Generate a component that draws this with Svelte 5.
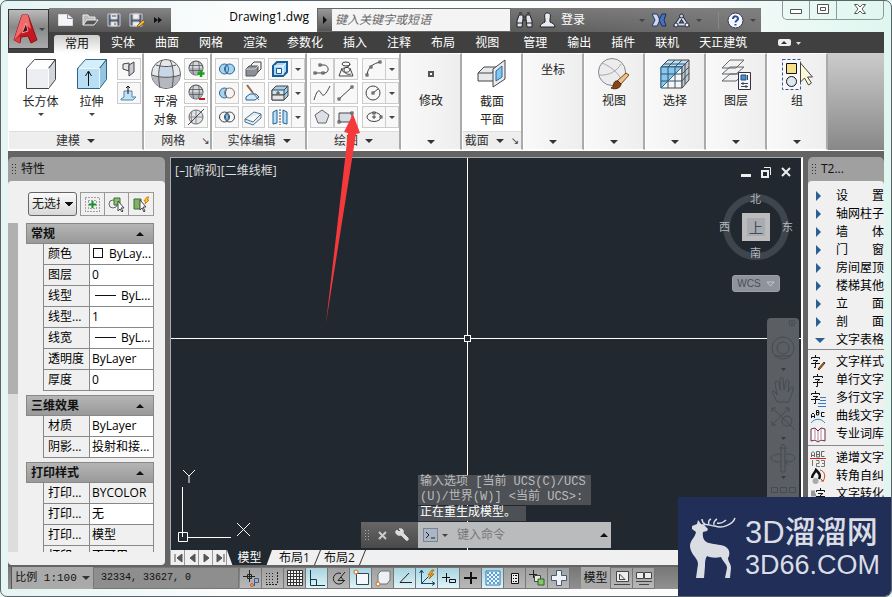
<script>
const svg = (w, h, body) => `<svg width="${w}" height="${h}" viewBox="0 0 ${w} ${h}" fill="none" stroke="#444" aria-hidden="true">${body}</svg>`;
const globe = '<circle cx="9" cy="8" r="7" fill="#d5d8dd"/><path d="M2.500 8h13v3c-3 5-10 5-13 0z" fill="#aeb3bc" stroke="none"/><path d="M2.500 5.500h13M2.500 10.500h13M6.500 1.500c-1 4-1 9 0 13M11.500 1.500c1 4 1 9 0 13" stroke="#555" stroke-width=".8"/>';
const node = (x, y) => `<rect x="${x}" y="${y}" width="2" height="2" fill="#fff"/>`;

const icons = {
    // quick access
    fresh: svg(17, 14, '<path d="M1.500 1.500h9l5 4v7h-14z" fill="#f5f6fa" stroke="#ddd"/><path d="M10.500 1.500v4h5" stroke="#889"/>'),
    open: svg(17, 14, '<path d="M1 12V2h5l1 2h6v3" fill="#bbb" stroke="#eee"/><path d="M1 12l4-5h11l-4 5z" fill="#555" stroke="#eee"/>'),
    save: svg(14, 14, '<path d="M1 1h12v12H1z" fill="#536078" stroke="#ccd"/><path d="M4 1h6v5H4zM4 9h6v4H4z" fill="#eee" stroke="#ccc"/><path d="M5 3h4M8 10v2"/>'),
    saveas: svg(17, 15, '<path d="M1 1h12v12H1z" fill="#536078" stroke="#ccd"/><path d="M4 1h6v5H4zM4 9h6v4H4z" fill="#eee" stroke="#ccc"/><path d="M8 13l6-6 2 2-6 5z" fill="#f5bb3c" stroke="#8c5a10"/>'),
    more: svg(8, 8, '<path d="M0 1l4 3-4 3zM4 1l4 3-4 3z" fill="#111" stroke="none"/>'),
    logo: svg(27, 34, '<path d="M2 28L10 3h6l9 25-6 3-3-7-7 1-1 6z" fill="#c41720" stroke="#8d1218"/><path d="M10 3h6l3 14-5-4-6 9-6 6z" fill="#ef6a6d" stroke="none"/><path d="M14 11l2 8-6 2z" fill="#4b1518" stroke="#f49a98"/><path d="M2 28l6-4v7z" fill="#e33b3e" stroke="none"/>'),

    // info center
    find: svg(17, 16, '<path d="M3 3h4v4l-1 8H1V9zM10 3h4l2 6v6h-5l-1-8z" fill="#dfe3ec" stroke="#222"/><path d="M7 5h3M7 8h3M3 1h3M11 1h3M1 11h5M11 11h5" stroke="#222"/>'),
    user: svg(17, 16, '<path d="M1 15c0-3 3-4 5-5V7c-1-5 0-6 2.500-6S12 2 11 7v3c2 1 5 2 5 5z" fill="#e8ebf3" stroke="#222"/>'),
    exchange: svg(16, 14, '<path d="M1 1h5l3 6-3 6H1l3-6z" fill="#cfd9f2" stroke="#223a72"/><path d="M15 1h-4L8 7l3 6h4l-2-6z" fill="#4772bd" stroke="#17305d"/>'),
    apps: svg(17, 15, '<path d="M8.500 4L3.500 11.500h10z" stroke="#2a3142" stroke-width="4"/><path d="M8.500 4L3.500 11.500h10z" stroke="#d5daea" stroke-width="2"/><circle cx="8.500" cy="3" r="2" fill="#c6cde0" stroke="#2a3142"/><circle cx="3" cy="12" r="2" fill="#eef" stroke="#2a3142"/><circle cx="14" cy="12" r="2" fill="#eef" stroke="#2a3142"/>'),
    help: svg(17, 17, '<circle cx="8.500" cy="8.500" r="7.500" fill="#f5f7fc" stroke="#323c50"/><path d="M6 7c0-4 5.500-3 5 0-.3 1.600-2.500 1.500-2.500 3.500M8.500 12v1.600" stroke="#2a4d8e" stroke-width="2"/>'),

    // large ribbon icons
    box: svg(32, 32, '<path d="M1.500 10.500l8-9h21l-7 9z" fill="#fdfdfe"/><path d="M1.500 10.500h22v20h-22z" fill="#eceef1"/><path d="M23.500 10.500l7-9v20l-7 9z" fill="#d2d5db"/><path d="M2 10.500h21.500V30" stroke="#fff"/>'),
    extrude: svg(32, 32, '<path d="M1.500 10.500l8-9h21l-7 9z" fill="#d6edfa" stroke="#2b6587"/><path d="M1.500 10.500h22v20h-22z" fill="#b8dff4" stroke="#2b6587"/><path d="M23.500 10.500l7-9v20l-7 9z" fill="#94c4df" stroke="#2b6587"/><path d="M2.500 10.500h21V30" stroke="#e9f6fd"/><path d="M12.500 28V14M9.500 18l3-5 3 5" stroke="#111"/>'),
    sphere: svg(32, 32, '<circle cx="16" cy="16" r="14.500" fill="#e6e8ec" stroke="#666"/><path d="M2 17c8 3 20 3 28 0C30 34 2 34 2 17z" fill="#b4b9c1" stroke="none"/><path d="M10 8c4 1 8 1 12 0l1 10c-5 1-9 1-14 0z" fill="#c9d6e6" stroke="none"/><path d="M2 17c8 3 20 3 28 0M6 7c6 2 14 2 20 0M12 2c-4 8-4 18-2 28M20 2c4 8 4 18 2 28" stroke="#555"/>'),
    section: svg(32, 32, '<path d="M2 15l6-6h12v14H2z" fill="#e7e9ed"/><path d="M2 15h14l4-6"/><path d="M17 11L29 2v19l-12 8z" fill="#e8eaef"/><path d="M20 13l6-5v11l-6 4z" fill="#85c5ef" stroke="#24669a"/>'),
    visual: svg(34, 34, '<circle cx="15" cy="15" r="13.500" fill="#ececef" stroke="#888"/><path d="M5 6c10 4 17 11 20 18M2 18c10 1 18-4 22-11" stroke="#aaa"/><path d="M20 24l9-8 3 2-8 9z" fill="#ecc18b" stroke="#7a4717"/><path d="M14 31c4-1 1-8 7-7l3 3c0 4-6 6-10 4z" fill="#864518" stroke="#55290b"/>'),
    select: svg(32, 32, '<path d="M2 9l7-7h21L23 9z" fill="#bcdff5"/><path d="M2 9h21v21H2z" fill="#f5f6f8"/><path d="M2 9h21L2 30z" fill="#86c6ef" stroke="#276b9c"/><path d="M23 9l7-7v20l-7 8z" fill="#c5c8ce"/><path d="M9 9v21M16 9v21M2 16h21M2 23h21M9 9l7-7M16 9l7-7M5 6h22M23 16l7-7M23 23l7-8M26 6v20" stroke="#345266"/>'),
    layers: svg(32, 32, '<path d="M2 23l8-7h14l-8 7zM2 16l8-7h14l-8 7zM2 10l8-8h14l-8 8z" fill="#f1f2f4" stroke="#666"/><path d="M18.500 14.500h12v17h-12z" fill="#f4f7fb" stroke="#334"/><path d="M21 17h5v5h-5z" fill="#4b8fd0" stroke="#1f4c82"/><path d="M27.500 17v5M21 25.500h7M21 28.500h7M23 24v3M26 27v3"/>'),
    group: svg(32, 33, '<path d="M1.500 1.500h18v30h-18z" fill="#f8f8fa" stroke="#31588e" stroke-dasharray="3 2"/><path d="M5.500 5.500h10v10h-10z" fill="#f7e089" stroke="#111"/><circle cx="10.500" cy="23.500" r="5" fill="#dceaf0" stroke="#111"/><path d="M19.500 5v19l4-4 4 7 3-2-4-6h5z" fill="#faf8d6" stroke="#444"/>'),
    modify: svg(8, 8, '<rect x="2" y="2" width="4" height="4" stroke="#555" stroke-width="2" fill="#fff"/>'),

    // small ribbon icons
    polysolid: svg(18, 18, '<path d="M3 4l6-1v8l-6-2z" fill="#e3e6eb"/><path d="M9 5l5-3v10l-5 4z" fill="#c8ccd3"/>'),
    presspull: svg(18, 18, '<path d="M1 15l3-2V7h8v6h4l-3 3H1z" fill="#c3e2f4" stroke="#4a86a8"/><path d="M8 10V2M6 4l2-2 2 2" stroke="#111"/>'),
    meshAdd: svg(18, 18, globe + '<path d="M14 10v7M10.500 13.500h7" stroke="#17a317" stroke-width="2.500"/>'),
    meshDel: svg(18, 18, globe + '<path d="M12 15h6" stroke="#c11d16" stroke-width="2"/>'),
    meshOff: svg(18, 18, '<circle cx="9" cy="9" r="7" fill="#e0e2e7" stroke="#666"/><path d="M2 9h14M9 2v14M5 3c-1 4-1 8 0 12" stroke="#888"/><path d="M1 17L17 1"/>'),
    union: svg(18, 18, '<circle cx="6.500" cy="9" r="5" fill="#a9d4f0" stroke="#286596"/><circle cx="11.500" cy="9" r="5" fill="#a9d4f0" stroke="#286596"/><path d="M9 5c-2 2-2 6 0 8 2-2 2-6 0-8z" stroke="#286596"/>'),
    subtract: svg(18, 18, '<circle cx="6.500" cy="9" r="5" fill="#a9d4f0" stroke="#286596"/><circle cx="11.500" cy="9" r="5" fill="#f4f4f4" stroke="#8c6e62"/><path d="M9 5c-2 2-2 6 0 8" stroke="#286596"/>'),
    intersect: svg(18, 18, '<circle cx="6.500" cy="9" r="5"/><circle cx="11.500" cy="9" r="5"/><path d="M9 5c-2 2-2 6 0 8 2-2 2-6 0-8z" fill="#8cc5ec" stroke="#286596"/>'),
    interfere: svg(18, 18, '<path d="M7 5l3-3h7v7l-3 3H7z" fill="#eff2f6"/><path d="M2 9l3-3h9v6l-3 4H2z" fill="#8b9098" stroke="#555"/><path d="M2 9h9l3-3" stroke="#ccc"/>'),
    slice: svg(18, 18, '<path d="M3 1l6 8" stroke="#95694a" stroke-width="2"/><path d="M2 13l4-3h6l3 3-4 3H2z" fill="#d5eaf8" stroke="#22659a"/><path d="M9 9l6 7" stroke="#667"/>'),
    thicken: svg(18, 18, '<path d="M1 11l9-7 7 2-8 8zM1 11v3l8 3 8-7V6" fill="#e0edf7" stroke="#4d718c"/>'),
    shell: svg(18, 18, '<path d="M2 6l4-4h10v10l-4 4H2z" fill="#a9d6f3" stroke="#165c98" stroke-width="2"/><path d="M5.500 8.500h5v5h-5z" fill="#fff" stroke="#165c98"/><path d="M12 6l3-3M3 6h9v9" stroke="#fff"/>'),
    offsetFace: svg(18, 18, '<path d="M1 6l4-4h12v10l-4 4H1z" fill="#9fcfed"/><path d="M1 6h12v5H1z" fill="#cfe7f5"/><path d="M1 11h12v5H1z" fill="#e4e6ea"/><path d="M13 6l4-4M13 11l4-4M7 10V7M5 9h4"/>'),
    mirror: svg(18, 18, '<path d="M2 4l4-2v13l-4 1zM16 4l-4-2v13l4 1z" fill="#b9def4" stroke="#226598"/><path d="M9 1v16" stroke-dasharray="2 1"/>'),
    pline: svg(18, 18, `<path d="M2 13h9c6 0 5-8 0-8H8"/>${node(1, 12)}${node(9, 12)}${node(6, 4)}`),
    spiral: svg(18, 18, '<path d="M5 8l-3 8h14l-3-8"/><ellipse cx="9" cy="4" rx="4" ry="2"/><path d="M13 4c0 4-8 3-8 6s8 3 8 0-6-4-6 0 5 5 7 4"/>'),
    spline: svg(18, 18, '<path d="M1 16C4 6 6 5 8 9s4 3 9-7"/>'),
    line: svg(18, 18, `<path d="M2 15L15 3"/>${node(1, 14)}${node(14, 2)}`),
    polygon: svg(18, 18, '<path d="M9 2l7 5-3 8H5L2 7z" fill="#dde0e6" stroke="#666"/>'),
    rect: svg(18, 18, `<path d="M2 5h13v9H2z" fill="#d9dce5"/>${node(1, 13)}${node(14, 4)}`),
    arc: svg(18, 18, `<path d="M2 16C2 8 8 3 16 2"/>${node(1, 14)}${node(5, 6)}${node(14, 1)}`),
    circle: svg(18, 18, `<circle cx="8" cy="9" r="7"/><path d="M8 9l5-4"/>${node(7, 8)}`),
    ellipse: svg(18, 18, `<ellipse cx="9" cy="9" rx="7" ry="4.500"/><path d="M9 7v4M7 9h4"/>${node(15, 8)}${node(8, 4)}`),

    // properties toolbar
    pickadd: svg(17, 17, '<path d="M1.500 1.500h14v14h-14zM4.500 4.500h8v8h-8z" stroke="#555" stroke-dasharray="1 2"/><path d="M8.500 5v7M5 8.500h7" stroke="#139126" stroke-width="2"/>'),
    pickobj: svg(17, 17, '<circle cx="5" cy="8" r="4" stroke="#667"/><path d="M6 2h6v7H6z" fill="#8bbd6d" stroke="#35712b"/><path d="M10 5v10l2-2 2 3 1-1-2-3h3z" fill="#fff"/>'),
    quick: svg(17, 17, '<path d="M1 3h7v10H1z" fill="#7fb262" stroke="#35712b"/><path d="M14 1l-3 4h2l-1 3 4-4h-2l2-3z" fill="#ffd33c" stroke="#d5830d"/><path d="M7 4v10l2-2 2 4 1-1-2-4h3z" fill="#fff"/>'),

    wrench: svg(15, 15, '<path d="M2 2l2 2 2-2-2-1c4-1 5 2 4 4l5 5c1 2-1 3-2 2L6 7C3 8 0 6 1 3z" fill="#ddd" stroke="#ddd"/>'),
    prompt: svg(15, 14, '<rect x=".5" y=".5" width="14" height="13" fill="#aab6c4" stroke="#788493"/><path d="M3 4l3 3-3 3M8 10h4" stroke="#223"/>'),

    // text tools
    styleText: svg(16, 17, '<path d="M5.500 1v2M1.500 5V3.500h8V5M3 6.500h5L5.500 8v5.500H4M1 9.500h9" stroke="#111"/><path d="M8 15l6-7 1 1-6 7z" fill="#c97936" stroke="#57320f"/>'),
    singleText: svg(16, 17, '<path d="M7.500 2v2M3.500 6V4.500h9V6M5 7.500h5L7.500 9v5.500H6M3 10.500h10" stroke="#111"/>'),
    multiText: svg(16, 17, '<path d="M5.500 1v2M1.500 5V3.500h8V5M3 6.500h5L5.500 8v5.500H4M1 9.500h9" stroke="#111"/><path d="M10 7.500h6M10 10.500h6M8 13.500h8M8 16.500h8" stroke="#347cc5"/>'),
    curveText: svg(16, 17, '<path d="M1.500 10V6.500L3 5l1.500 1.500V10M2 8.500h2M6.500 7V2.500h2L9 4.500 8.500 7h-2M7 4.500h2M14.500 4.500h-3v4h3" stroke="#111"/><path d="M1 15c4-5 10-5 14 0" stroke="#258bd0"/>'),
    dictionary: svg(16, 17, '<path d="M1 3l4-1 3 3 3-3 4 1v12l-4-1-3 2-3-2-4 1z" fill="#fff" stroke="#6a2948"/><path d="M8 5v10M5 3v10M11 3v10" stroke="#b0879a"/>'),
    increment: svg(16, 17, '<path d="M1.500 7V3L3 1.500 4.500 3v4M2 5.500h2M6.500 7V1.500h3V7h-3M7 4.500h2M14.500 1.500h-3v5h3" stroke="#666"/><path d="M0 8.500h16" stroke="#d6281f"/><path d="M2.500 10v6M6 10.500h3v3H6.500v3H10M11 10.500h3.500v6H11M12 13.500h3" stroke="#777"/>'),
    rotateText: svg(16, 17, '<path d="M2 10c0-4 3-5 4-8 3 3 5 5 3 9" stroke="#111" stroke-width="2.500"/><path d="M10 2c5 1 6 7 3 11l-2-2M11 13h3" stroke="#c84917"/><circle cx="5.500" cy="13" r="3" fill="#aaa" stroke="none"/>'),
    convertText: svg(16, 17, '<path d="M10.500 2v2M6.500 6V4.500h8V6M8 7.500h5L10.500 9v6M6 10.500h9" stroke="#111"/><path d="M1 6h4M1 9h5" stroke="#999" stroke-width="3"/>'),

    // status bar toggles
    infer: svg(18, 18, '<path d="M1 7.500h12M7.500 1v12M5.500 5.500h4v4h-4z" stroke="#222"/><path d="M12.500 9.500h4v4h-4zM12.500 13v4" stroke="#365d99"/><circle cx="10" cy="16" r="1.500" stroke="#d05c1b"/>'),
    snap: svg(18, 18, '<path d="M2 4.500h9M2 7.500h9M2 10.500h9M2 13.500h9" stroke-dasharray="1 2" stroke="#222"/><path d="M13.500 3v11M2 15.500h12" stroke-dasharray="2 1" stroke="#222"/>'),
    grid: svg(18, 18, '<path d="M1.500 1.500h15v15h-15zM4.500 1v15M7.500 1v15M10.500 1v15M13.500 1v15M1 4.500h15M1 7.500h15M1 10.500h15M1 13.500h15" fill="#f4f4f4" stroke="#333"/>'),
    ortho: svg(18, 18, '<path d="M2.500 1v15.500H17M2 10.500h6.500V16" stroke="#123a48"/>'),
    polar: svg(18, 18, '<path d="M11 4.500a5.500 5.500 0 1 0 3 7M8 11.500L15 3M8 11.500h7M11 8l3 4" stroke="#222"/>'),
    osnap: svg(18, 18, '<path d="M4.500 4.500h12v11h-12z" fill="#f4f7fb" stroke="#345"/><circle cx="4" cy="3" r="2" stroke="#d46518" fill="#fff"/>'),
    osnap3: svg(18, 18, '<path d="M4 5l3-3h9v9l-3 4H4z" fill="#eceff4" stroke="#677"/><circle cx="4" cy="15" r="2" stroke="#d46518" fill="#fff"/>'),
    otrack: svg(18, 18, '<path d="M13 4L4 13.500h12" stroke="#222"/>'),
    ducs: svg(18, 18, '<path d="M3.500 2v12.500H16M3.500 14.500l7-7M1.500 4l2-3 2 3M14 12.500l3 2-3 2" stroke="#164a62"/><path d="M14 1l-4 5h3l-2 4 5-5h-3l3-4z" fill="#f4b92a" stroke="#b66b0b"/>'),
    dyn: svg(18, 18, '<path d="M2 8.500h8M6.500 4v9M9.500 10.500h6v3h-6z" stroke="#111"/>'),
    lwt: svg(18, 18, '<path d="M2 9h13M9 3v12" stroke="#111" stroke-width="2"/>'),
    trans: svg(18, 18, '<path d="M2 2h14v14H2z" fill="#eaf5fd" stroke="#2f74a9"/><path d="M3 4h12M3 8h12M3 12h12M5 6h10M5 10h10M5 14h10" stroke="#5d9ed4" stroke-width="2" stroke-dasharray="2 2"/>'),
    props: svg(18, 18, '<path d="M5.500 4.500h7v10h-7z" stroke="#111" fill="#eee"/><path d="M7 6.500h1M9 6.500h2M7 9.500h1M9 9.500h2M7 12.500h1M9 12.500h2" stroke="#111"/>'),
    cycle: svg(18, 18, '<path d="M1 5.500h8M5.500 1v8" stroke="#222"/><path d="M6.500 6.500h6v6h-6z" fill="#e4eedd"/><path d="M10 10h6v6h-6z" fill="#8cc370" stroke="#2c6321"/>'),
    plus: svg(18, 18, '<path d="M6.500 1.500h5v5h5v5h-5v5h-5v-5h-5v-5h5z" fill="#eff3f9" stroke="#485873"/>'),
    paper: svg(18, 18, '<path d="M3.500 2.500h12v10h-12z" fill="#eee"/><path d="M6.500 5v5.500H12z"/><path d="M1 15.500h16"/>'),
    views: svg(18, 18, '<path d="M1.500 3.500h7v6h-7zM9.500 3.500h7v6h-7z" fill="#eee"/><path d="M1 12.500h16M4 15.500h10"/>'),
};

const tabs = ['实体', '曲面', '网格', '渲染', '参数化', '插入', '注释', '布局', '视图'];
const extra_tabs = ['管理', '输出', '插件', '联机', '天正建筑'];
const edit_rows = [['union', 'interfere', 'shell'], ['subtract', 'slice', 'offsetFace'], ['intersect', 'thicken', 'mirror']];
const draw_rows = [['pline', 'spiral', 'arc'], ['spline', 'line', 'circle'], ['polygon', 'rect', 'ellipse']];
const collapsed = [['视图', 'visual'], ['选择', 'select'], ['图层', 'layers'], ['组', 'group']];

const sections = [
    {title: '常规', rows: [
        ['颜色', 'ByLay...', 'swatch'], ['图层', '0'], ['线型', 'ByL...', 'dash'], ['线型...', '1'],
        ['线宽', 'ByL...', 'dash'], ['透明度', 'ByLayer'], ['厚度', '0'],
    ]},
    {title: '三维效果', rows: [['材质', 'ByLayer'], ['阴影...', '投射和接...']]},
    {title: '打印样式', rows: [['打印...', 'BYCOLOR', 'locked'], ['打印...', '无'], ['打印...', '模型', 'locked'], ['打印...', '不可用', 'locked']]},
];

const menus = ['设　　置', '轴网柱子', '墙　　体', '门　　窗', '房间屋顶', '楼梯其他', '立　　面', '剖　　面', '文字表格'];
const text_tools = [['文字样式', 'styleText'], ['单行文字', 'singleText'], ['多行文字', 'multiText'], ['曲线文字', 'curveText'], ['专业词库', 'dictionary']];
const more_tools = [['递增文字', 'increment'], ['转角自纠', 'rotateText'], ['文字转化', 'convertText']];

const toggles = ['infer', 'snap', 'grid', 'ortho', 'polar', 'osnap', 'osnap3', 'otrack', 'ducs', 'dyn', 'lwt', 'trans', 'props', 'cycle', 'plus'];
let active = $state(['ortho', 'osnap', 'otrack', 'ducs', 'dyn', 'trans']);
function toggle(name) {
    active = active.includes(name) ? active.filter(n => n !== name) : [...active, name];
}
</script>

{#snippet tool(name)}
  <button class=tool aria-label={name}>{@html icons[name]}</button>
{/snippet}

{#snippet split(name)}
  <div class=split>
    {@render tool(name)}
    <button class=drop aria-label="{name} options"><i class=caret></i></button>
  </div>
{/snippet}

<div class=window>
  <header>
    <button class=app aria-label=Menu>{@html icons.logo}<i class=caret></i></button>
    <div class=titlebar>
      <div class=quickbar>
        {#each ['fresh', 'open', 'save', 'saveas', 'more'] as name}
          <button aria-label={name}>{@html icons[name]}</button>
        {/each}
      </div>
      <h1>Drawing1.dwg</h1>
      <div class=search>
        <button aria-label="Search options"><i class=play></i></button>
        <input type=search placeholder="键入关键字或短语" aria-label="键入关键字或短语">
      </div>
      <div class=info>
        <button aria-label=Find>{@html icons.find}</button>
        <button class=login>{@html icons.user}登录</button>
        <i class="caret push"></i>
        <button aria-label=Exchange>{@html icons.exchange}</button>
        <button aria-label=Apps>{@html icons.apps}</button>
        <i class=caret></i>
        <button class=help aria-label=Help>{@html icons.help}</button>
        <i class=caret></i>
      </div>
      <div class=controls>
        <button aria-label=Minimize><svg width="14" height="14" fill="#fff" stroke="#555"><path d="M1.500 6.500h11v4h-11z"/></svg></button>
        <button aria-label=Maximize><svg width="14" height="14" fill="#fff" stroke="#555"><path d="M1.500 1.500h11v9h-11zM4.500 4.500h5v3h-5z"/></svg></button>
        <button class=close aria-label=Close><svg width="14" height="14" fill="#fff" stroke="#555"><path d="M1.500 1.500h3L7 4l2.500-2.500h3L9 6l3.500 4.500h-3L7 8l-2.500 2.500h-3L5 6z"/></svg></button>
      </div>
    </div>
    <nav>
      <button class=current>常用</button>
      {#each tabs as tab}<button>{tab}</button>{/each}
      <span class=extra>{#each extra_tabs as tab}<button>{tab}</button>{/each}</span>
      <button class=collapse aria-label=Collapse><svg width="24" height="8"><rect width="13" height="7" rx="2" fill="#eee"/><path d="M3 5l3-3 3 3z" fill="#333"/><path d="M18 3h5l-2.500 3z" fill="#ddd"/></svg></button>
    </nav>
  </header>

  <div class=ribbon>
    <section class="panel modeling">
      <div class=content>
        <button class=big>{@html icons.box}<span>长方体</span><i class=caret></i></button>
        <button class=big>{@html icons.extrude}<span>拉伸</span><i class=caret></i></button>
        <div class=stack>{@render tool('polysolid')}{@render tool('presspull')}</div>
      </div>
      <h2>建模 <i class=arrow></i></h2>
    </section>
    <section class="panel mesh">
      <div class=content>
        <button class="big narrow">{@html icons.sphere}<span>平滑<br>对象</span></button>
        <div class=stack>{@render tool('meshAdd')}{@render tool('meshDel')}{@render tool('meshOff')}</div>
      </div>
      <h2>网格 <span class=launch>↘</span></h2>
    </section>
    <section class="panel edit">
      <div class="content rows">
        {#each edit_rows as [a, b, c]}
          <div>{@render tool(a)}{@render tool(b)}{@render split(c)}</div>
        {/each}
      </div>
      <h2>实体编辑 <i class=arrow></i></h2>
    </section>
    <section class="panel draw">
      <div class="content rows">
        {#each draw_rows as [a, b, c]}
          <div><span class=pair>{@render tool(a)}{@render tool(b)}</span>{@render split(c)}</div>
        {/each}
      </div>
      <h2>绘图 <i class=arrow></i></h2>
    </section>
    <button class="panel folded"><span class=pic>{@html icons.modify}</span>修改<i class=arrow></i></button>
    <section class=panel>
      <div class=content>
        <button class="big wide">{@html icons.section}<span>截面<br>平面</span></button>
      </div>
      <h2>截面 <i class=arrow></i><span class=launch>↘</span></h2>
    </section>
    <button class="panel folded coord">坐标<i class=arrow></i></button>
    {#each collapsed as [label, icon]}
      <button class="panel folded"><span class=pic>{@html icons[icon]}</span>{label}<i class=arrow></i></button>
    {/each}
  </div>

  <main>
    <aside class="palette properties">
      <h3><i class=grip></i>特性</h3>
      <div class=palette-body>
        <div class=picker>
          <select aria-label=Selection><option>无选择</option></select>
          <div class=picks>
            {#each ['pickadd', 'pickobj', 'quick'] as name}
              <button aria-label={name}>{@html icons[name]}</button>
            {/each}
          </div>
        </div>
        <div class=list>
          <div class=scroll><i></i></div>
          <div class=groups>
            {#each sections as section}
              <h4>{section.title}<i class=up></i></h4>
              <table>
                <tbody>
                  {#each section.rows as [label, value, kind]}
                    <tr><th scope=row>{label}</th><td class:locked={kind === 'locked'}>{#if kind === 'swatch' || kind === 'dash'}<i class={kind}></i>{/if}{value}</td></tr>
                  {/each}
                </tbody>
              </table>
            {/each}
          </div>
        </div>
      </div>
    </aside>

    <div class=document>
      <div class=canvas>
        <p class=view-label>[–][俯视][二维线框]</p>
        <i class=cross-x></i><i class=cross-y></i><i class=pickbox></i>
        <div class=mdi>
          <button aria-label="Minimize drawing"><svg width="12" height="12"><path d="M1 8h10v3H1z" fill="#eee"/></svg></button>
          <button aria-label="Restore drawing"><svg width="12" height="12" fill="none" stroke="#eee"><path d="M2 5h6v6H2z" stroke-width="2"/><path d="M4 1.500h6.500V9"/></svg></button>
          <button aria-label="Close drawing"><svg width="12" height="12" stroke="#eee" stroke-width="2"><path d="M2 2l8 8M10 2l-8 8"/></svg></button>
        </div>
        <div class=compass>
          <span class=n>北</span><span class=w>西</span><b>上</b><span class=e>东</span><span class=s>南</span>
        </div>
        <button class=wcs>WCS <svg width="9" height="6" fill="none" stroke="#bcc"><path d="M1 1h7L4.500 5z"/></svg></button>
        <div class=navbar>
          <svg width="32" height="192" viewBox="0 0 32 192" fill="none" stroke="#464b51">
            <circle cx="25" cy="5" r="3"/><path d="M24 4l2 2M26 4l-2 2"/>
            <circle cx="16" cy="30" r="11"/><circle cx="16" cy="30" r="6"/><path d="M8 38h16"/>
            <path d="M10 84L5 74c1-2 3-1 5 3L8 64c1-2 3-1 4 1l1 7V61c1-2 3-2 3 0l1 11 2-9c1-2 3-1 3 1l-1 10 3-5c2-1 3 0 2 3l-4 12z"/>
            <path d="M5 90l18 17M22 90L5 107M5 94v-4h4M18 90h4v4M5 103v4h4"/><circle cx="20" cy="103" r="5"/><path d="M23 107l5 5"/>
            <path d="M14 130h4v24h-4zM12 131l4-5 4 5M13 136c-12 0-12 8 0 8M19 136c12 0 12 8 0 8M21 141l-3 3 3 3"/>
            <path d="M4.500 169.500h6v5h-6zM13.500 169.500h6v5h-6zM22.500 169.500h6v5h-6z"/>
            <path d="M14 50h5l-2.500 3zM14 119h5l-2.500 3zM14 158h5l-2.500 3z" fill="#383c42" stroke="none"/>
          </svg>
        </div>
        <svg class=ucs width="84" height="78" fill="none" stroke="#fff" aria-hidden="true">
          <path d="M6 1l6 6 6-6M12 7v7M5.500 18v50M10 68.500h44M1.500 63.500h9v9h-9zM60 54l13 13M73 54L60 67"/>
        </svg>
        <div class=console>
          <p class=log>输入选项 [当前 UCS(C)/UCS<br>(U)/世界(W)] &lt;当前 UCS&gt;:</p>
          <p class="log last">正在重生成模型。</p>
          <div class=command>
            <i class=grip></i>
            <button aria-label=Close><svg width="9" height="9" stroke="#ccc" stroke-width="2"><path d="M1 1l7 7M8 1L1 8"/></svg></button>
            <button aria-label=Customize>{@html icons.wrench}</button>
            <label>{@html icons.prompt}<i class=caret></i><input placeholder="键入命令" aria-label="键入命令"><i class=up></i></label>
          </div>
        </div>
      </div>
      <div class=layouts>
        <div class=steps>
          {#each ['M3 2v8M10 2L5 6l5 4z', 'M9 2L4 6l5 4z', 'M4 2l5 4-5 4z', 'M10 2v8M3 2l5 4-5 4z'] as d}
            <button aria-label=Step><svg width="12" height="12" fill="#555" stroke="#555"><path {d}/></svg></button>
          {/each}
        </div>
        <button class="sheet current">模型</button>
        <button class=sheet>布局1</button>
        <button class=sheet>布局2</button>
      </div>
    </div>

    <aside class="palette tangent">
      <h3><i class=grip></i>T2...</h3>
      <div class=palette-body>
        <ul>
          {#each menus as item, i}
            <li><button><i class={i === menus.length - 1 ? 'tri open' : 'tri'}></i>{item}</button></li>
          {/each}
        </ul>
        {#each [text_tools, more_tools] as group}
          <ul class=tools>
            {#each group as [label, icon]}
              <li><button><span>{@html icons[icon]}</span>{label}</button></li>
            {/each}
          </ul>
        {/each}
      </div>
    </aside>
  </main>

  <footer>
    <button class=scale>比例 1:100 <i class=arrow></i></button>
    <output>32334, 33627, 0</output>
    {#each toggles as name}
      <button class=toggle class:on={active.includes(name)} aria-label={name} aria-pressed={active.includes(name)} onclick={() => toggle(name)}>{@html icons[name]}</button>
    {/each}
    <button class=space>模型</button>
    <button class=toggle aria-label=Layout>{@html icons.paper}</button>
    <button class=toggle aria-label=Views>{@html icons.views}</button>
  </footer>

  <svg class=pointer width="36" height="212" aria-hidden="true"><path d="M28 1L19 19l4 1L1 210 31 21l4-1z" fill="#f5393a"/></svg>

  <div class=watermark>
    <svg width="48" height="64" viewBox="0 0 48 64" fill="none" stroke="#dadde3" stroke-width="1.500" aria-hidden="true">
      <path d="M3 11l5-2 1-4 3 4 3 1 4 4-1 2-4 1c-1 5 1 10 6 11 6 2 13 1 17 4 3 2 4 5 3 9l-1 2c0 4 3 5 3 10l-1 10h-5l2-10c0-4-4-6-6-11-5 1-10 1-14-1-2 3-2 6-2 10l-1 12H7l2-14c0-6-8-10-8-18 0-6 5-8 6-14l-4-3z" fill="#dadde3" stroke="none"/>
      <path d="M13 10c6-2 8 1 13 1 8 3 18-2 20-8M16 9c-2-1-3-3-3-5M20 9c-1-2 0-4 2-5M25 10c-1-2 1-5 3-6M28 8c3 1 7-1 9-3"/>
    </svg>
    <p><b>3D溜溜网</b><span>3D66.COM</span></p>
  </div>
</div>

<style>
:global(body) {
  margin: 0;
  background: #e9f6f3;
}
.window {
  position: relative;
  display: flex;
  flex-direction: column;
  box-sizing: border-box;
  height: 100vh;
  padding: 0 7px 7px;
  border: 1px solid #59646a;
  border-radius: 7px;
  overflow: hidden;
  background: linear-gradient(90deg, #e4f5f3, #fbfcfc 25%, #fcfcfc 75%, #dff6ef);
  font: 12px/18px "Open Sans", "Noto Sans CJK SC", sans-serif;
  color: #222;
}
button, input, select {
  margin: 0;
  padding: 0;
  border: 0;
  background: none;
  font: inherit;
  color: inherit;
}
button {
  display: flex;
  align-items: center;
  justify-content: center;
  white-space: nowrap;
}
h1, h2, h3, h4, p, ul {
  margin: 0;
  padding: 0;
  font-weight: normal;
  font-size: 12px;
  list-style: none;
}
i { flex: none; }
.caret {
  border: 3px solid transparent;
  border-top-color: #444;
  border-bottom: 0;
}
.arrow {
  display: inline-block;
  border: 4px solid transparent;
  border-top-color: #333;
  border-bottom: 0;
}
.up {
  border: 4px solid transparent;
  border-bottom-color: #111;
  border-top: 0;
}
.grip {
  width: 6px;
  height: 12px;
  background: radial-gradient(circle, #333 1px, transparent 1px) 0 0 / 3px 3px;
}

header {
  display: grid;
  grid-template-columns: 41px 1fr;
  grid-template-rows: 31px 21px;
}
.app {
  grid-area: 1 / 1 / 3 / 2;
  align-self: end;
  z-index: 1;
  height: 40px;
  margin-bottom: 4px;
  border: 1px solid #333;
  background: linear-gradient(#bbb, #888 45%, #aaa);
}
.titlebar {
  grid-area: 1 / 2;
  display: flex;
  align-items: flex-end;
}
.quickbar, .info {
  display: flex;
  align-items: center;
  height: 24px;
  background: linear-gradient(#858585, #555);
}
.quickbar {
  width: 122px;
  gap: 8px;
  padding-left: 8px;
  box-sizing: border-box;
}
h1 {
  flex: 1;
  padding: 0 8px 6px 0;
  text-align: right;
  color: #000;
}
.search {
  display: flex;
  box-sizing: border-box;
  width: 194px;
  height: 24px;
  border: 1px solid #666;
}
.search button {
  width: 14px;
  background: linear-gradient(#999, #555);
}
.play {
  border: 4px solid transparent;
  border-left-color: #111;
  border-right: 0;
}
.search input {
  flex: 1;
  min-width: 0;
  padding-left: 3px;
  background: #f4f4f4;
  font-style: italic;
}
.search input::placeholder { color: #666; }
.info {
  box-sizing: border-box;
  width: 250px;
  padding: 0 5px;
  gap: 6px;
  color: #fff;
  background: linear-gradient(90deg, transparent, #8888), linear-gradient(#777, #5a5a5a);
}
.login { gap: 5px; }
.push { margin-left: auto; }
.help {
  margin-left: 10px;
  padding-left: 8px;
  border-left: 1px solid #888;
}
.controls {
  display: flex;
  align-self: flex-start;
  height: 18px;
  margin-left: 21px;
  border: 1px solid #8b989c;
  border-top: 0;
  border-radius: 0 0 5px 5px;
}
.controls button {
  width: 27px;
  border-right: 1px solid #8b989c;
}
.controls .close {
  width: 46px;
  border: 0;
}
nav {
  grid-area: 2 / 1 / 3 / 3;
  display: flex;
  align-items: center;
  gap: 20px;
  padding-left: 46px;
  background: #404040;
  color: #fff;
}
nav .current {
  width: 46px;
  height: 18px;
  margin-right: -9px;
  align-self: flex-end;
  border-radius: 3px 3px 0 0;
  background: linear-gradient(#ccc, #fff);
  color: #111;
}
.extra {
  display: flex;
  gap: 20px;
  margin-left: 4px;
}
.collapse { margin-left: 11px; }

.ribbon {
  display: flex;
  height: 97px;
  border-bottom: 1px solid #fff;
  background: linear-gradient(#ccc, #888);
}
.panel {
  display: flex;
  flex-direction: column;
  flex: none;
  box-sizing: border-box;
  width: 61px;
  border: 1px solid #fff;
  border-right: 2px solid #aaa;
  background: #fff;
}
.modeling { width: 136px; }
.mesh { width: 68px; }
.edit { width: 95px; }
.draw { width: 94px; }
.content {
  display: flex;
  flex: 1;
  padding: 4px 0 0 2px;
}
.modeling .content { padding-left: 6px; }
.panel h2 {
  display: flex;
  align-items: center;
  justify-content: center;
  gap: 7px;
  height: 17px;
  border-top: 1px solid #ddd;
  background: #eee;
  color: #333;
}
.launch {
  font: 10px/10px "DejaVu Sans", sans-serif;
}
.mesh .launch { margin: 0 -16px 0 9px; }
.big {
  flex-direction: column;
  justify-content: flex-start;
  width: 51px;
}
.big.narrow { width: 37px; }
.big.wide { width: 54px; }
.big span { margin-top: 3px; }
.big .caret { margin-top: 2px; }
.stack {
  display: flex;
  flex-direction: column;
  gap: 2px;
}
.tool {
  box-sizing: border-box;
  width: 24px;
  height: 22px;
  border: 1px solid #ccc;
  background: #f8f8f8;
}
.split { display: flex; }
.drop {
  box-sizing: border-box;
  width: 13px;
  border: 1px solid #ccc;
  border-left: 0;
  background: #f8f8f8;
}
.rows {
  flex-direction: column;
  gap: 2px;
}
.rows > div {
  display: flex;
  gap: 3px;
}
.pair {
  display: flex;
  margin-right: 1px;
}
.folded {
  justify-content: flex-start;
  padding: 2px 0 5px;
  background: linear-gradient(90deg, #f9f9f9, #eee);
}
.pic {
  display: flex;
  align-items: center;
  height: 36px;
}
.folded .arrow { margin-top: auto; }
.coord { padding-top: 7px; }

main {
  display: flex;
  flex: 1;
  gap: 5px;
  min-height: 0;
  padding: 6px 0 2px;
  background: #646464;
}
.palette {
  display: flex;
  flex-direction: column;
  flex: none;
  overflow: hidden;
}
.properties { width: 157px; }
.tangent { width: 76px; }
h3 {
  display: flex;
  align-items: center;
  gap: 4px;
  height: 28px;
  margin-bottom: -4px;
  padding: 0 3px 4px;
  box-sizing: border-box;
  border-radius: 5px 5px 0 0;
  background: #a0a0a0;
  color: #111;
}
.palette-body {
  display: flex;
  flex: 1;
  flex-direction: column;
  min-height: 0;
  border-radius: 4px;
  background: #f0f0f0;
}
.picker {
  display: flex;
  gap: 3px;
  padding: 11px 0 7px 20px;
}
select {
  appearance: none;
  box-sizing: border-box;
  width: 49px;
  height: 24px;
  padding: 0 16px 0 3px;
  border: 1px solid #666;
  border-radius: 3px;
  background: linear-gradient(to top right, transparent 50%, #111 50%) 36px 9px / 4px 5px no-repeat, linear-gradient(to top left, transparent 50%, #111 50%) 40px 9px / 4px 5px no-repeat, linear-gradient(#fafafa, #d8d8d8);
}
.picks {
  display: flex;
  border: 1px solid #999;
}
.picks button {
  width: 24px;
  border-right: 1px solid #999;
}
.picks button:last-child { border: 0; }
.list {
  display: flex;
  flex: 1;
  gap: 8px;
  min-height: 0;
  margin-bottom: 13px;
}
.scroll {
  width: 10px;
  background: #ddd;
}
.scroll i {
  display: block;
  height: 52%;
  background: #b0b0b0;
}
.groups {
  width: 128px;
  overflow: hidden;
}
h4 {
  display: flex;
  align-items: center;
  justify-content: space-between;
  box-sizing: border-box;
  height: 21px;
  padding: 0 9px 0 4px;
  border: 1px solid #888;
  background: linear-gradient(#b5b5b5, #999);
  font-weight: bold;
  color: #111;
}
table {
  table-layout: fixed;
  width: 111px;
  margin: 0 0 4px 17px;
  border-collapse: collapse;
  color: #000;
}
th, td {
  height: 20px;
  padding: 0 0 0 4px;
  border: 1px solid #888;
  border-top: 0;
  font-weight: normal;
  line-height: 18px;
  text-align: left;
  white-space: nowrap;
  overflow: hidden;
}
th { width: 41px; }
td {
  padding-left: 2px;
  background: #fff;
}
td.locked { background: #f0f0f0; }
.swatch {
  display: inline-block;
  width: 8px;
  height: 8px;
  margin: 0 6px 0 1px;
  border: 1px solid #111;
}
.dash {
  display: inline-block;
  width: 21px;
  height: 4px;
  margin: 0 5px 0 3px;
  border-top: 1px solid #111;
}

.document {
  display: flex;
  flex: 1;
  flex-direction: column;
  min-width: 0;
  border: 1px solid #aaa;
  border-right: 2px solid #fff;
  border-bottom: 0;
}
.canvas {
  position: relative;
  flex: 1;
  background: #212830;
}
.view-label {
  padding: 4px;
  color: #ddd;
}
.cross-x, .cross-y, .pickbox { position: absolute; background: #fff; }
.cross-x { top: 46%; left: 0; width: 100%; height: 1px; }
.cross-y { left: 47%; top: 0; width: 1px; height: 100%; }
.pickbox {
  top: 46%;
  left: 47%;
  width: 5px;
  height: 5px;
  margin: -3px;
  border: 1px solid #fff;
  background: #212830;
}
.mdi {
  position: absolute;
  top: 8px;
  right: 9px;
  display: flex;
  gap: 8px;
}
.compass {
  position: absolute;
  top: 36px;
  right: 12px;
  box-sizing: border-box;
  width: 66px;
  height: 66px;
  border: 7px solid #3e454c;
  border-radius: 50%;
  font-size: 11px;
  color: #b4b9be;
}
.compass span { position: absolute; line-height: 12px; }
.n { top: -8px; left: 20px; }
.s { bottom: -6px; left: 20px; }
.w { left: -11px; top: 20px; }
.e { right: -11px; top: 20px; }
.compass b {
  display: block;
  box-sizing: border-box;
  width: 28px;
  height: 28px;
  margin: 12px;
  border: 5px solid #bbb;
  background: #a8acb2;
  font: 14px/18px "Noto Sans CJK SC", sans-serif;
  text-align: center;
  color: #444c56;
}
.wcs {
  position: absolute;
  top: 117px;
  right: 21px;
  gap: 5px;
  width: 48px;
  height: 17px;
  border: 1px solid #9ba0a8;
  border-radius: 3px;
  box-sizing: border-box;
  background: #8e939c;
  font: 10px/14px "Liberation Sans", sans-serif;
  color: #4a5058;
}
.navbar {
  position: absolute;
  top: 160px;
  right: 2px;
  bottom: 0;
  width: 32px;
  border-radius: 4px 4px 0 0;
  background: #5b5f63;
}
.ucs {
  position: absolute;
  left: 6px;
  bottom: 3px;
}
.console {
  position: absolute;
  left: 190px;
  bottom: 2px;
  width: 250px;
}
.log {
  width: 170px;
  margin: 0 0 1px 57px;
  padding: 0 1px 0 2px;
  background: #4d5156;
  font: 12px/15px "Liberation Mono", "Noto Sans CJK SC", monospace;
  color: #bbb;
  white-space: nowrap;
}
.log.last {
  width: 105px;
  color: #fff;
}
.command {
  display: flex;
  align-items: center;
  gap: 8px;
  height: 26px;
  padding-left: 3px;
  background: linear-gradient(#666, #4a4a4a);
}
.command .grip { background: radial-gradient(circle, #aaa 1px, transparent 1px) 0 0 / 3px 3px; }
.command label {
  display: flex;
  align-items: center;
  flex: 1;
  min-width: 0;
  gap: 4px;
  height: 100%;
  padding: 0 3px 0 5px;
  background: #babbbd;
}
.command input {
  flex: 1;
  min-width: 0;
  margin-left: 5px;
}
.command input::placeholder { color: #777; }
.layouts {
  display: flex;
  height: 15px;
  overflow: hidden;
  background: #f0f0f0;
  line-height: 14px;
  color: #111;
}
.steps {
  display: flex;
}
.steps button {
  width: 14px;
  border-right: 1px solid #999;
  box-sizing: border-box;
}
.sheet {
  width: 45px;
  position: relative;
}
.sheet::after {
  content: "";
  position: absolute;
  top: 0;
  right: -1px;
  height: 100%;
  border-right: 1px solid #333;
  transform: skewX(-22deg);
}
.sheet.current {
  background: #212830;
  clip-path: polygon(0 0, 100% 0, 88% 100%, 12% 100%);
  color: #fff;
}

ul { padding-top: 6px; }
ul.tools {
  padding-top: 3px;
  border-top: 1px solid #888;
}
ul + .tools + .tools { margin-top: 2px; }
.tangent .palette-body { overflow: hidden; }
.tangent button {
  justify-content: flex-start;
  height: 18px;
  color: #000;
}
.tangent li span {
  display: flex;
  width: 26px;
  padding-left: 2px;
}
.tri {
  margin: 0 15px 0 8px;
  border: 5px solid transparent;
  border-left-color: #2b5f92;
  border-right: 0;
}
.tri.open {
  margin: 0 11px 0 7px;
  border: 5px solid transparent;
  border-top-color: #2b5f92;
  border-bottom: 0;
}

footer {
  display: flex;
  align-items: stretch;
  height: 22px;
  background: linear-gradient(#777, #909090);
  color: #111;
}
.scale, output {
  box-sizing: border-box;
  font: 11px/20px "Liberation Mono", "Noto Sans CJK SC", monospace;
}
.scale {
  gap: 5px;
  width: 82px;
  margin-left: 3px;
  border-left: 1px solid #555;
  background: #aaa;
}
output {
  width: 146px;
  margin-right: 1px;
  padding-left: 7px;
  border: 1px solid #777;
  background: #8e8e8e;
  font-size: 10px;
}
.toggle {
  box-sizing: border-box;
  width: 22px;
  border: 1px solid #777;
  border-left: 0;
  background: linear-gradient(#a0a0a0, #b8b8b8);
}
.toggle.on { background: linear-gradient(#a8d3df, #dff4f8); }
.space {
  width: 30px;
  margin-left: 11px;
  border-right: 1px solid #777;
  background: #aaa;
}

.pointer {
  position: absolute;
  top: 112px;
  left: 324px;
  pointer-events: none;
}
.watermark {
  position: absolute;
  right: 0;
  bottom: 0;
  display: flex;
  align-items: center;
  gap: 8px;
  box-sizing: border-box;
  width: 213px;
  height: 99px;
  padding-left: 11px;
  background: #202e58;
  color: #dadde3;
}
.watermark p {
  display: flex;
  flex-direction: column;
}
.watermark b {
  font: 500 31px/36px "Liberation Sans", "Noto Sans CJK SC", sans-serif;
}
.watermark span {
  font: 27px/28px "Liberation Sans", sans-serif;
}
</style>
